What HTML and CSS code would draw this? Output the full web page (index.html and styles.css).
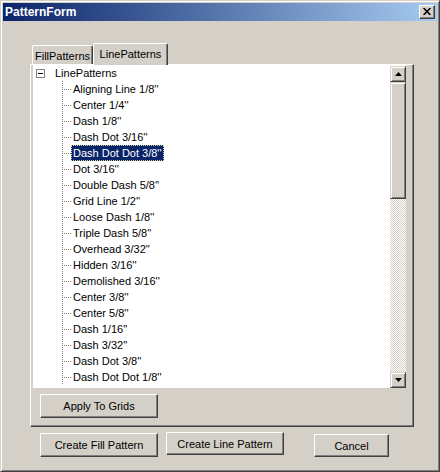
FILE: index.html
```html
<!DOCTYPE html>
<html>
<head>
<meta charset="utf-8">
<link rel="stylesheet" href="styles.css">
</head>
<body>
<div class="window">
  <div class="titlebar">
    <span class="title">PatternForm</span>
    <span class="close"><svg width="8" height="7" viewBox="0 0 8 7"><path d="M0.6 0 L7.4 7 M7.4 0 L0.6 7" stroke="#000" stroke-width="1.6" fill="none"/></svg></span>
  </div>
  <div class="tabs">
    <div class="tab">FillPatterns</div>
    <div class="tab active">LinePatterns</div>
  </div>
  <div class="panel">
    <div class="tree">
      <div class="list">
        <div class="row root"><span class="expander"></span><span class="label">LinePatterns</span></div>
        <div class="row child"><span class="label">Aligning Line 1/8''</span></div>
        <div class="row child"><span class="label">Center 1/4''</span></div>
        <div class="row child"><span class="label">Dash 1/8''</span></div>
        <div class="row child"><span class="label">Dash Dot 3/16''</span></div>
        <div class="row child"><span class="label selected">Dash Dot Dot 3/8''</span></div>
        <div class="row child"><span class="label">Dot 3/16''</span></div>
        <div class="row child"><span class="label">Double Dash 5/8''</span></div>
        <div class="row child"><span class="label">Grid Line 1/2''</span></div>
        <div class="row child"><span class="label">Loose Dash 1/8''</span></div>
        <div class="row child"><span class="label">Triple Dash 5/8''</span></div>
        <div class="row child"><span class="label">Overhead 3/32''</span></div>
        <div class="row child"><span class="label">Hidden 3/16''</span></div>
        <div class="row child"><span class="label">Demolished 3/16''</span></div>
        <div class="row child"><span class="label">Center 3/8''</span></div>
        <div class="row child"><span class="label">Center 5/8''</span></div>
        <div class="row child"><span class="label">Dash 1/16''</span></div>
        <div class="row child"><span class="label">Dash 3/32''</span></div>
        <div class="row child"><span class="label">Dash Dot 3/8''</span></div>
        <div class="row child"><span class="label">Dash Dot Dot 1/8''</span></div>
      </div>
      <div class="scrollbar">
        <div class="sbtn"><svg width="7" height="4" viewBox="0 0 7 4"><polygon points="3.5,0 7,4 0,4" fill="#000"/></svg></div>
        <div class="thumb"></div>
        <div class="track"></div>
        <div class="sbtn"><svg width="7" height="4" viewBox="0 0 7 4"><polygon points="0,0 7,0 3.5,4" fill="#000"/></svg></div>
      </div>
    </div>
    <button class="btn apply">Apply To Grids</button>
  </div>
  <div class="actions">
    <button class="btn wide fill">Create Fill Pattern</button>
    <button class="btn wide line">Create Line Pattern</button>
    <button class="btn cancel">Cancel</button>
  </div>
</div>
</body>
</html>
```
FILE: styles.css
```css
* { box-sizing: border-box; }
html, body { margin: 0; padding: 0; background: #d4d0c8; }
body { font-family: "Liberation Sans", Arial, sans-serif; font-size: 11px; color: #000; }

.window {
  width: 440px;
  height: 472px;
  background: #d4d0c8;
  border: 1px solid;
  border-color: #d4d0c8 #404040 #404040 #d4d0c8;
  box-shadow: inset 1px 1px #fff, inset -1px -1px #808080;
  padding: 2px;
}

.titlebar {
  height: 18px;
  background: linear-gradient(to right, #0a246a, #a6caf0);
  display: flex;
  align-items: center;
  justify-content: space-between;
  padding: 0 2px 0 2px;
}
.title { color: #fff; font-weight: bold; font-size: 12px; }
.close {
  width: 16px;
  height: 14px;
  background: #d4d0c8;
  border: 1px solid;
  border-color: #fff #404040 #404040 #fff;
  box-shadow: inset -1px -1px #808080;
  display: flex;
  align-items: center;
  justify-content: center;
  padding-bottom: 1px;
}
.close svg { display: block; }

.tabs {
  margin: 22px 0 0 29px;
  height: 21px;
  display: flex;
  align-items: flex-start;
  position: relative;
  z-index: 1;
}
.tab {
  margin-top: 2px;
  height: 19px;
  width: 61px;
  padding-top: 4px;
  text-align: center;
  border: 1px solid;
  border-bottom: none;
  border-color: #fff #404040 #404040 #fff;
  box-shadow: inset -1px 0 #808080;
  border-radius: 2px 2px 0 0;
  background: #d4d0c8;
}
.tab.active {
  margin-top: 0;
  height: 22px;
  width: 75px;
  padding-top: 4px;
}

.panel {
  margin-left: 27px;
  width: 384px;
  height: 363px;
  border: 1px solid;
  border-color: #fff #404040 #404040 #fff;
  box-shadow: inset -1px -1px #808080;
  padding: 0 0 0 2px;
}

.tree {
  width: 373px;
  height: 323px;
  background: #fff;
  display: flex;
}
.list { flex: 1; overflow: hidden; }
.row {
  height: 16px;
  line-height: 16px;
  display: flex;
  align-items: center;
  white-space: nowrap;
}
.root { padding-left: 3px; }
.expander {
  width: 9px;
  height: 9px;
  border: 1px solid #808080;
  display: flex;
  align-items: center;
  justify-content: center;
}
.expander::before {
  content: "";
  width: 5px;
  height: 1px;
  background: #000;
}
.root .label { margin-left: 8px; }
.label { padding: 0 2px; height: 16px; }
.child {
  padding-left: 38px;
  background:
    repeating-linear-gradient(to bottom, #808080 0 1px, transparent 1px 2px) 29px 0 / 1px 100% no-repeat,
    repeating-linear-gradient(to right, #808080 0 1px, transparent 1px 2px) 31px 8px / 8px 1px no-repeat;
}
.selected {
  background: #0a246a;
  color: #fff;
  outline: 1px dotted #d8d49c;
  outline-offset: -1px;
}

.scrollbar {
  width: 16px;
  margin-top: 1px;
  display: flex;
  flex-direction: column;
}
.sbtn, .thumb {
  background: #d4d0c8;
  border: 1px solid;
  border-color: #d4d0c8 #404040 #404040 #d4d0c8;
  box-shadow: inset 1px 1px #fff, inset -1px -1px #808080;
}
.sbtn {
  height: 16px;
  display: flex;
  align-items: center;
  justify-content: center;
}
.sbtn svg { display: block; }
.thumb { height: 117px; }
.track {
  flex: 1;
  background: repeating-conic-gradient(#d4d0c8 0 25%, #fff 0 50%) 0 0 / 2px 2px;
}

.btn {
  font-family: "Liberation Sans", Arial, sans-serif;
  font-size: 11px;
  color: #000;
  background: #d4d0c8;
  border: 1px solid;
  border-color: #fff #404040 #404040 #fff;
  box-shadow: inset -1px -1px #808080;
  padding: 0;
  display: block;
}
.apply { width: 118px; height: 24px; margin: 6px 0 0 7px; }

.actions {
  margin: 6px 0 0 37px;
  display: flex;
  align-items: flex-start;
}
.wide { width: 118px; height: 24px; }
.fill { margin-top: 0; }
.line { margin-left: 8px; margin-top: -1px; height: 23px; }
.cancel { width: 75px; height: 23px; margin-left: 30px; margin-top: 1px; }
```
